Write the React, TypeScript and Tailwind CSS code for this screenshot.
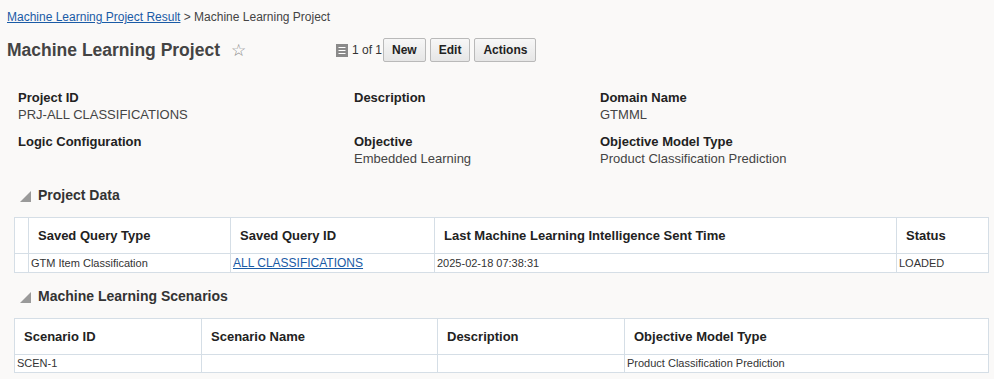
import { useState } from 'react';

type Field = { label: string; value?: string };

const fieldRows: Field[][] = [
  [
    { label: 'Project ID', value: 'PRJ-ALL CLASSIFICATIONS' },
    { label: 'Description' },
    { label: 'Domain Name', value: 'GTMML' },
  ],
  [
    { label: 'Logic Configuration' },
    { label: 'Objective', value: 'Embedded Learning' },
    { label: 'Objective Model Type', value: 'Product Classification Prediction' },
  ],
];

function SectionTitle({ title }: { title: string }) {
  return (
    <div className="flex items-center h-[22px] pl-[20px]">
      <svg width="11" height="11" viewBox="0 0 11 11" className="mr-[7px] mt-[2px]">
        <polygon points="11,0 11,11 0,11" fill="#9a9a9a" />
      </svg>
      <span className="text-[14px] font-bold text-[#333]">{title}</span>
    </div>
  );
}

export default function App() {
  const [starred, setStarred] = useState(false);

  return (
    <div className="w-[994px] h-[379px] bg-[#faf9f8] font-['Liberation_Sans',Arial,sans-serif] text-[#333] overflow-hidden">
      {/* Breadcrumb */}
      <div className="pl-[7px] pt-[9px] text-[12px] leading-[16px]">
        <a href="#" className="text-[#1a5ba6] underline">Machine Learning Project Result</a>
        <span className="text-[#444]"> &gt; Machine Learning Project</span>
      </div>

      {/* Title bar */}
      <div className="flex items-center pl-[7px] mt-[12px] h-[26px]">
        <h1 className="text-[17.5px] font-bold text-[#444] w-[224px]">Machine Learning Project</h1>
        <button onClick={() => setStarred(!starred)} className="text-[17px] text-[#888] leading-none w-[105px] text-left">
          {starred ? '★' : '☆'}
        </button>
        <svg width="12" height="13" viewBox="0 0 12 13" className="mr-[4px]">
          <rect width="12" height="13" fill="#8a8a8a" />
          <rect x="2.5" y="3" width="7" height="1" fill="#fff" />
          <rect x="2.5" y="6" width="7" height="1" fill="#fff" />
          <rect x="2.5" y="9" width="7" height="1" fill="#fff" />
        </svg>
        <span className="text-[12px] text-[#333] mr-[1px]">1 of 1</span>
        <div className="flex gap-[4px]">
          {['New', 'Edit', 'Actions'].map((b) => (
            <button
              key={b}
              className="h-[24px] px-[8px] text-[12px] font-bold text-[#222] border border-[#b9b9b9] rounded-[2px] bg-gradient-to-b from-[#f7f7f7] to-[#e6e6e6]"
            >
              {b}
            </button>
          ))}
        </div>
      </div>

      {/* Fields */}
      <div className="mt-[26px] flex flex-col gap-[10px]">
        {fieldRows.map((row, i) => (
          <div key={i} className="grid grid-cols-[336px_246px_1fr] pl-[18px]">
            {row.map((f) => (
              <div key={f.label} className="h-[34px]">
                <div className="text-[13px] font-bold text-[#222] leading-[17px]">{f.label}</div>
                {f.value && <div className="text-[13px] text-[#444] leading-[17px]">{f.value}</div>}
              </div>
            ))}
          </div>
        ))}
      </div>

      {/* Project Data */}
      <div className="mt-[17px]">
        <SectionTitle title="Project Data" />
      </div>
      <div className="mx-[14px] mt-[11px]">
        <table className="w-[974px] border-collapse bg-white table-fixed">
          <colgroup>
            <col className="w-[14px]" />
            <col className="w-[202px]" />
            <col className="w-[204px]" />
            <col className="w-[462px]" />
            <col className="w-[92px]" />
          </colgroup>
          <thead>
            <tr className="h-[36px]">
              <th className="border border-[#d5dee6]"></th>
              {['Saved Query Type', 'Saved Query ID', 'Last Machine Learning Intelligence Sent Time', 'Status'].map((h) => (
                <th key={h} className="border border-[#d5dee6] text-left pl-[9px] text-[13px] font-bold text-[#222]">{h}</th>
              ))}
            </tr>
          </thead>
          <tbody>
            <tr className="h-[18px] text-[11px] text-[#333]">
              <td className="border border-[#d5dee6]"></td>
              <td className="border border-[#d5dee6] pl-[2px]">GTM Item Classification</td>
              <td className="border border-[#d5dee6] pl-[2px]">
                <a href="#" className="text-[#1a5ba6] underline text-[12px]">ALL CLASSIFICATIONS</a>
              </td>
              <td className="border border-[#d5dee6] pl-[2px]">2025-02-18 07:38:31</td>
              <td className="border border-[#d5dee6] pl-[2px]">LOADED</td>
            </tr>
          </tbody>
        </table>
      </div>

      {/* Machine Learning Scenarios */}
      <div className="mt-[12px]">
        <SectionTitle title="Machine Learning Scenarios" />
      </div>
      <div className="mx-[14px] mt-[11px]">
        <table className="w-[974px] border-collapse bg-white table-fixed">
          <colgroup>
            <col className="w-[187px]" />
            <col className="w-[236px]" />
            <col className="w-[187px]" />
            <col className="w-[364px]" />
          </colgroup>
          <thead>
            <tr className="h-[36px]">
              {['Scenario ID', 'Scenario Name', 'Description', 'Objective Model Type'].map((h) => (
                <th key={h} className="border border-[#d5dee6] text-left pl-[9px] text-[13px] font-bold text-[#222]">{h}</th>
              ))}
            </tr>
          </thead>
          <tbody>
            <tr className="h-[18px] text-[11px] text-[#333]">
              <td className="border border-[#d5dee6] pl-[2px]">SCEN-1</td>
              <td className="border border-[#d5dee6]"></td>
              <td className="border border-[#d5dee6]"></td>
              <td className="border border-[#d5dee6] pl-[2px]">Product Classification Prediction</td>
            </tr>
          </tbody>
        </table>
      </div>
    </div>
  );
}
